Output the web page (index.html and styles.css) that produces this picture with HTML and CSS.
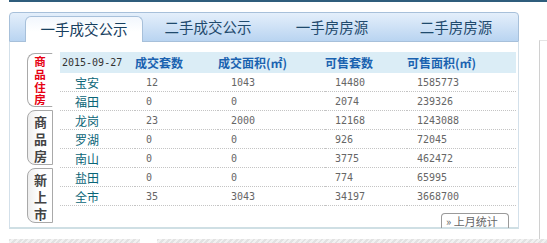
FILE: index.html
```html
<!DOCTYPE html>
<html lang="zh">
<head>
<meta charset="utf-8">
<link rel="stylesheet" href="styles.css">
</head>
<body>
<div class="topline"></div>
<div class="wrap">
  <div class="panel">
    <div class="tabbar">
      <div class="tab active">一手成交公示</div>
      <div class="tab">二手成交公示</div>
      <div class="tab">一手房房源</div>
      <div class="tab">二手房房源</div>
    </div>
    <div class="body">
      <div class="vtabs">
        <div class="vtab on">商品住房</div>
        <div class="vtab">商品房</div>
        <div class="vtab">新上市</div>
      </div>
      <div class="main">
        <table class="data">
          <colgroup>
            <col class="c1"><col class="c2"><col class="c3"><col class="c4"><col class="c5">
          </colgroup>
          <thead>
            <tr>
              <th class="date">2015-09-27</th>
              <th>成交套数</th>
              <th>成交面积(㎡)</th>
              <th>可售套数</th>
              <th>可售面积(㎡)</th>
            </tr>
          </thead>
          <tbody>
            <tr><td class="name">宝安</td><td>12</td><td>1043</td><td>14480</td><td>1585773</td></tr>
            <tr><td class="name">福田</td><td>0</td><td>0</td><td>2074</td><td>239326</td></tr>
            <tr><td class="name">龙岗</td><td>23</td><td>2000</td><td>12168</td><td>1243088</td></tr>
            <tr><td class="name">罗湖</td><td>0</td><td>0</td><td>926</td><td>72045</td></tr>
            <tr><td class="name">南山</td><td>0</td><td>0</td><td>3775</td><td>462472</td></tr>
            <tr><td class="name">盐田</td><td>0</td><td>0</td><td>774</td><td>65995</td></tr>
            <tr><td class="name">全市</td><td>35</td><td>3043</td><td>34197</td><td>3668700</td></tr>
          </tbody>
        </table>
        <div class="btnrow"><span class="btn">» 上月统计</span></div>
      </div>
    </div>
  </div>
  <div class="side"></div>
</div>
<div class="bottomstrip"><div class="seg a"></div><div class="seg b"></div></div>
</body>
</html>
```
FILE: styles.css
```css
html, body {
  margin: 0;
  padding: 0;
  background: #fff;
  width: 547px;
  height: 243px;
  overflow: hidden;
  font-family: "Noto Sans CJK SC", "Noto Sans", sans-serif;
}
.topline {
  height: 2px;
  margin-left: 9px;
  background: #2f5d7c;
}
.wrap {
  display: flex;
  align-items: flex-start;
}
.panel {
  margin-top: 10px;
  margin-left: 9px;
  width: 514px;
}
.tabbar {
  box-sizing: border-box;
  height: 30px;
  border: 1px solid #a7c0da;
  border-radius: 4px 4px 0 0;
  background: linear-gradient(#e4effb, #b9d4f1);
  display: flex;
  align-items: flex-end;
  padding-left: 12px;
}
.tab {
  width: 124px;
  height: 25px;
  margin-bottom: 1px;
  text-align: center;
  font-size: 14.5px;
  line-height: 24px;
  color: #1f4a6d;
}
.tab.active {
  box-sizing: border-box;
  width: 118px;
  margin: 0 3px -1px;
  height: 26px;
  border: 1px solid #a7c0da;
  border-bottom: none;
  border-radius: 6px 6px 0 0;
  background: linear-gradient(#f2f7fd, #ffffff 60%);
  color: #17405f;
}
.body {
  box-sizing: border-box;
  height: 187px;
  border-left: 1px solid #d3e0ea;
  border-right: 1px solid #d3e0ea;
  border-bottom: 2px solid #cfdfe4;
  display: flex;
  padding-left: 17px;
}
.vtabs {
  width: 26px;
  padding-top: 11px;
  display: flex;
  flex-direction: column;
  gap: 3px;
}
.vtab {
  box-sizing: border-box;
  height: 55px;
  border: 1px solid #a9a9a9;
  border-radius: 8px 0 0 8px;
  background: linear-gradient(90deg, #eeeeee, #ffffff 50%);
  color: #444;
  font-weight: bold;
  font-size: 13px;
  line-height: 17px;
  padding: 2px 6px 0;
  text-align: center;
  word-break: break-all;
}
.vtab.on {
  height: 54px;
  background: #fff;
  color: #e60012;
  font-size: 11.5px;
  line-height: 12.8px;
  padding: 1px 6px 0;
  border-right-color: #fff;
}
.main {
  margin-left: 7px;
  padding-top: 10px;
  width: 456px;
}
.data {
  border-collapse: collapse;
  table-layout: fixed;
  width: 456px;
}
.c1 { width: 75px; }
.c2 { width: 83px; }
.c3 { width: 107px; }
.c4 { width: 82px; }
.c5 { width: 109px; }
.data thead tr {
  background: #dbedf6;
}
.data th {
  height: 21px;
  padding: 0;
  text-align: left;
  font-size: 12px;
  font-weight: bold;
  color: #1a62b0;
}
.data th.date {
  padding-left: 2px;
  font-family: "DejaVu Sans Mono", monospace;
  font-weight: normal;
  font-size: 10px;
  color: #333;
}
.data td {
  height: 18px;
  padding: 0;
  border-bottom: 1px dotted #c4c4c4;
  font-family: "DejaVu Sans Mono", monospace;
  font-size: 10px;
  color: #666;
}
.data td:nth-child(2) { padding-left: 11px; }
.data td:nth-child(3) { padding-left: 13px; }
.data td:nth-child(4) { padding-left: 10px; }
.data td:nth-child(5) { padding-left: 10px; }
.data td.name {
  padding-left: 15px;
  font-family: "Noto Sans CJK SC", sans-serif;
  font-size: 12px;
  color: #0a6577;
}
.btnrow {
  display: flex;
  justify-content: flex-end;
  margin-top: 7px;
  padding-right: 7px;
}
.btn {
  box-sizing: border-box;
  width: 68px;
  height: 15px;
  border: 1px solid #9a9a9a;
  border-bottom: none;
  border-radius: 4px 4px 0 0;
  font-size: 11px;
  line-height: 14px;
  color: #666;
  padding-left: 4px;
  white-space: nowrap;
  overflow: hidden;
}
.side {
  margin-top: 38px;
  margin-left: 20px;
  width: 10px;
  height: 200px;
  border-left: 1px solid #d0d0d0;
  border-top: 1px solid #e4e4e4;
}
.bottomstrip {
  position: absolute;
  left: 0;
  top: 239px;
  width: 547px;
  display: flex;
}
.seg {
  height: 4px;
  background: repeating-linear-gradient(135deg, #e2e2e2 0 2px, #f1f1f1 2px 4px);
}
.seg.a { margin-left: 9px; width: 131px; }
.seg.b { margin-left: 17px; width: 390px; }
```
